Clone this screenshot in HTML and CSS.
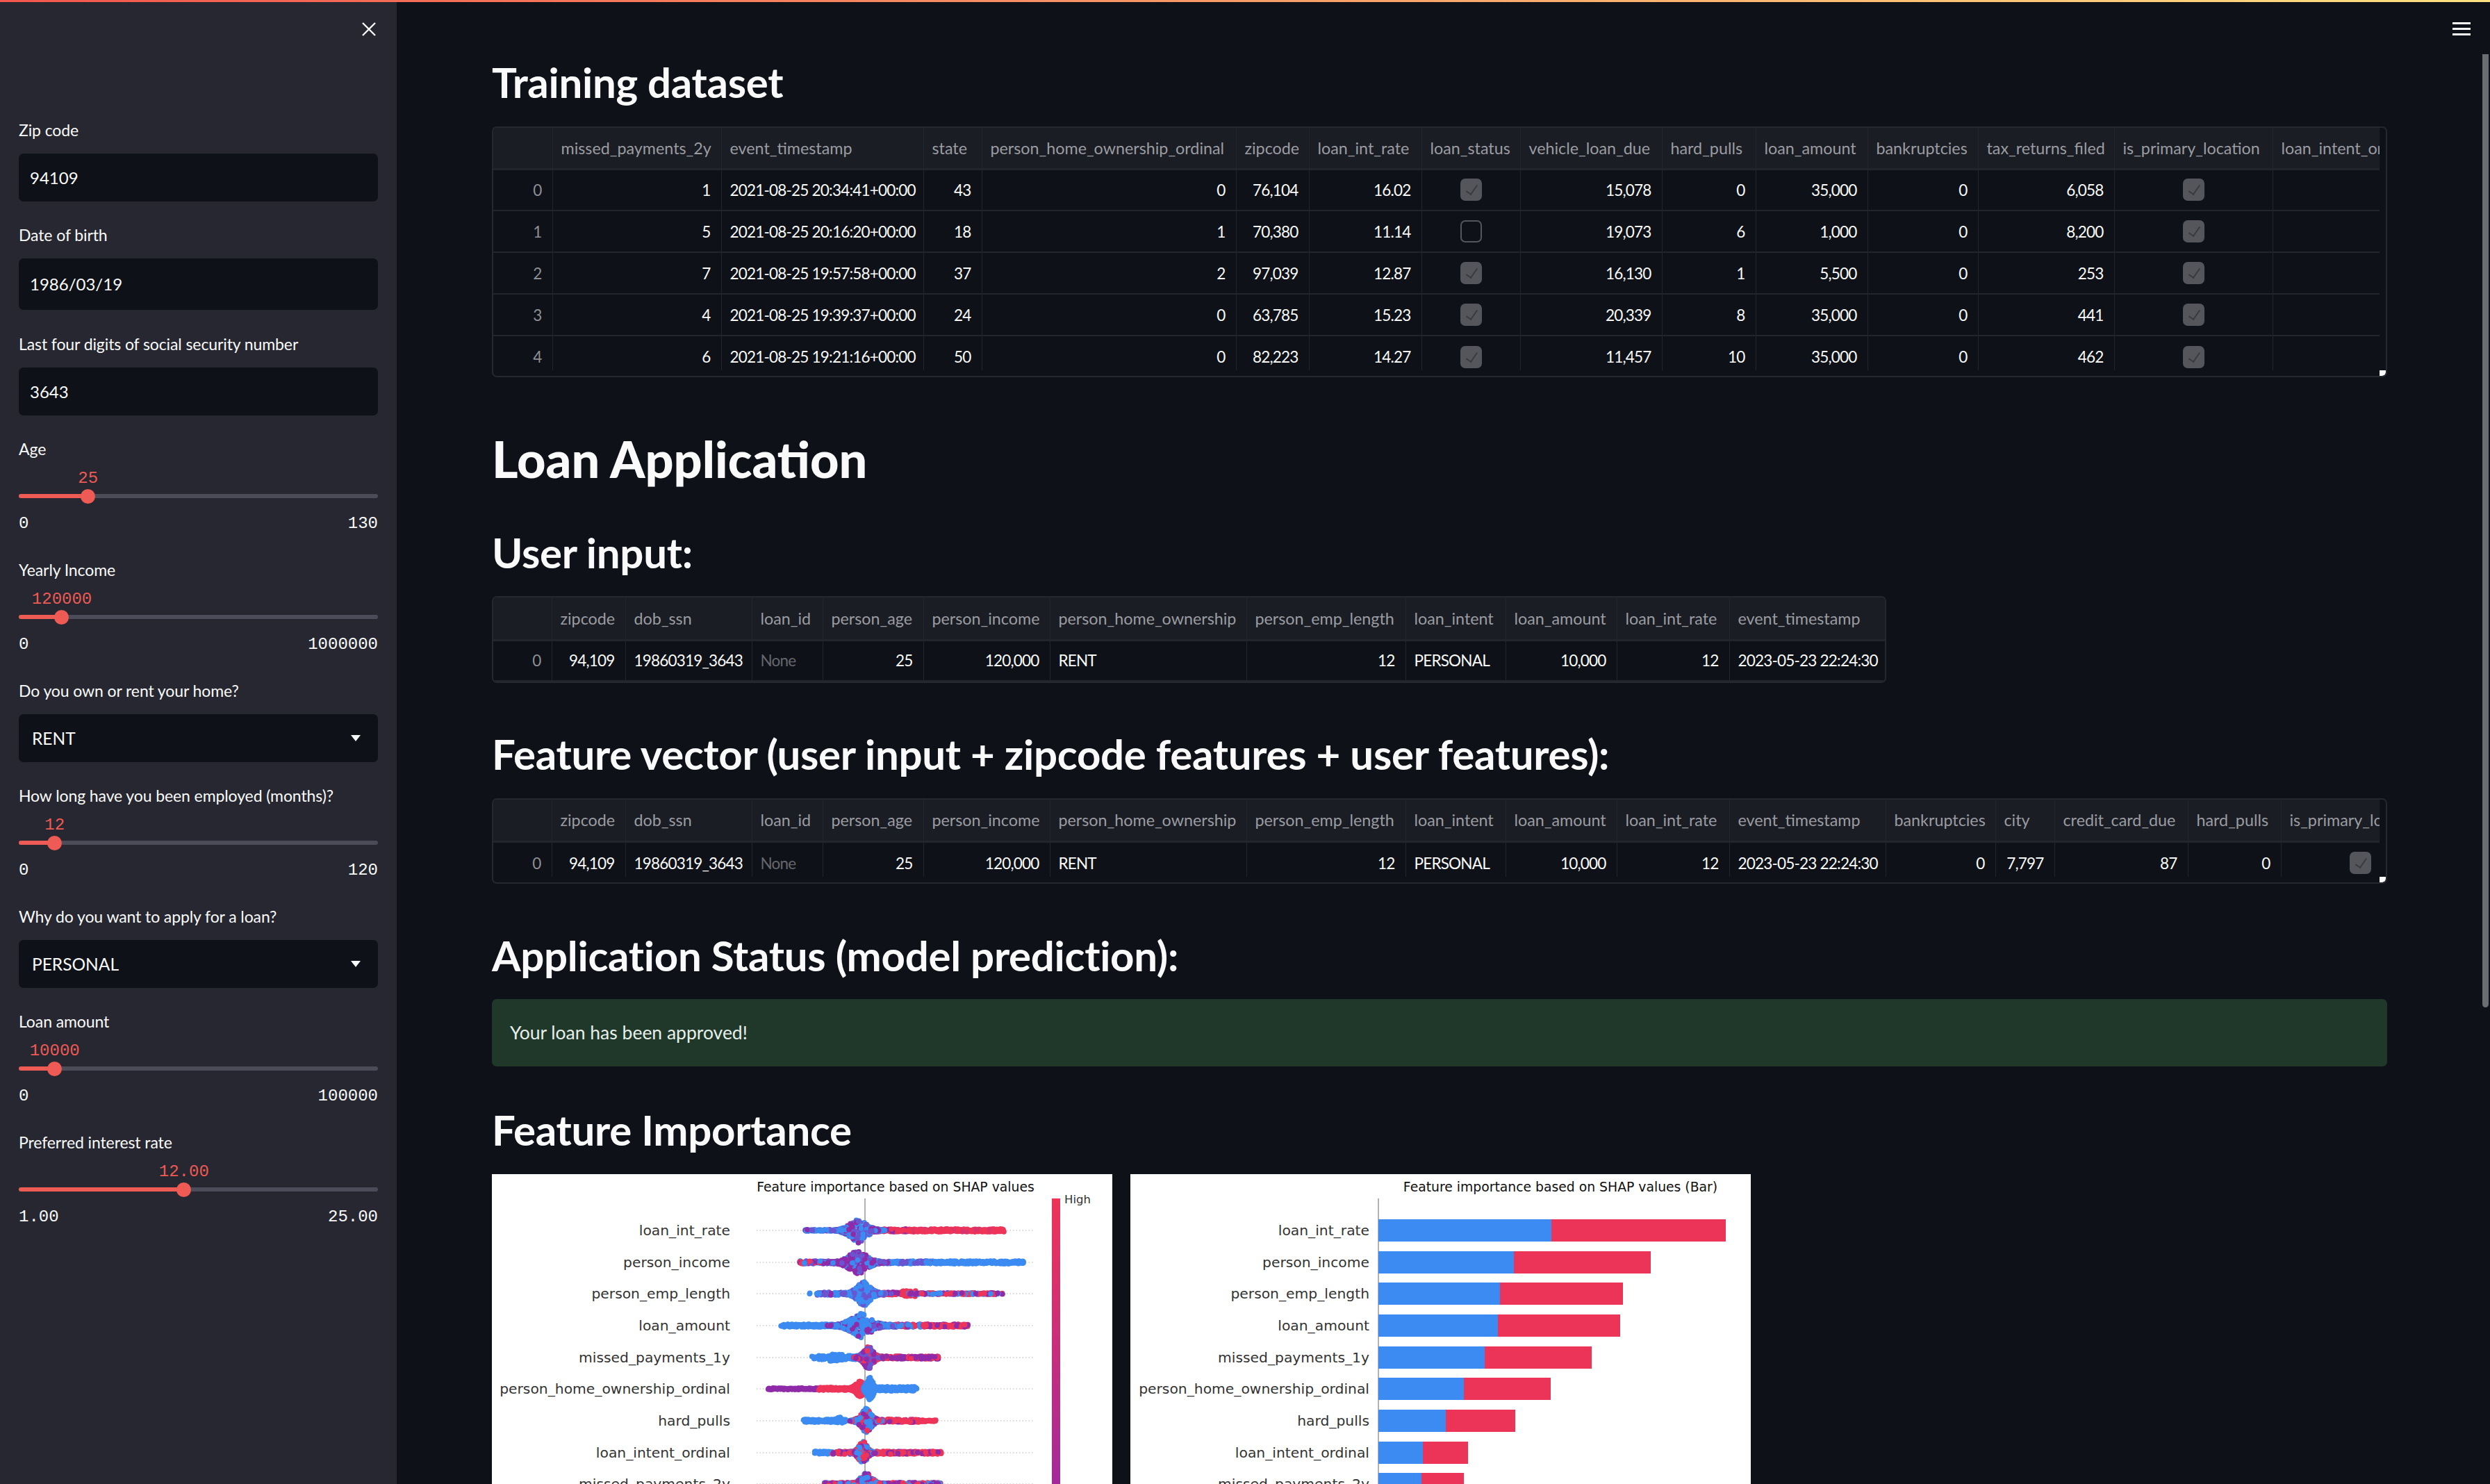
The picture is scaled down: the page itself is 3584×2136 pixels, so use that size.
FILE: index.html
```html
<!DOCTYPE html>
<html lang="en">
<head>
    <meta charset="UTF-8">
    <title>Loan Application</title>
    <link rel="stylesheet" href="styles.css">
</head>
<body>
    <div class="top-line"></div>
    <div class="app">
        <aside class="sidebar">
            <svg class="close-icon" viewBox="0 0 20 20"><path d="M1 1 19 19M19 1 1 19"/></svg>

            <div class="widget">
                <label class="label">Zip code</label>
                <div class="field">94109</div>
            </div>
            <div class="widget">
                <label class="label">Date of birth</label>
                <div class="field field-tall">1986/03/19</div>
            </div>
            <div class="widget">
                <label class="label">Last four digits of social security number</label>
                <div class="field">3643</div>
            </div>
            <div class="widget">
                <label class="label">Age</label>
                <div class="slider">
                    <div class="track"><div class="fill" style="width:19.3%"><span class="thumb"></span><span class="value">25</span></div></div>
                    <div class="range"><span>0</span><span>130</span></div>
                </div>
            </div>
            <div class="widget">
                <label class="label">Yearly Income</label>
                <div class="slider">
                    <div class="track"><div class="fill" style="width:12%"><span class="thumb"></span><span class="value">120000</span></div></div>
                    <div class="range"><span>0</span><span>1000000</span></div>
                </div>
            </div>
            <div class="widget">
                <label class="label">Do you own or rent your home?</label>
                <div class="field select">RENT<svg class="caret" viewBox="0 0 14 9"><path d="M0 0H14L7 9Z"/></svg></div>
            </div>
            <div class="widget">
                <label class="label">How long have you been employed (months)?</label>
                <div class="slider">
                    <div class="track"><div class="fill" style="width:10%"><span class="thumb"></span><span class="value">12</span></div></div>
                    <div class="range"><span>0</span><span>120</span></div>
                </div>
            </div>
            <div class="widget">
                <label class="label">Why do you want to apply for a loan?</label>
                <div class="field select">PERSONAL<svg class="caret" viewBox="0 0 14 9"><path d="M0 0H14L7 9Z"/></svg></div>
            </div>
            <div class="widget">
                <label class="label">Loan amount</label>
                <div class="slider">
                    <div class="track"><div class="fill" style="width:10%"><span class="thumb"></span><span class="value">10000</span></div></div>
                    <div class="range"><span>0</span><span>100000</span></div>
                </div>
            </div>
            <div class="widget">
                <label class="label">Preferred interest rate</label>
                <div class="slider">
                    <div class="track"><div class="fill" style="width:46%"><span class="thumb"></span><span class="value">12.00</span></div></div>
                    <div class="range"><span>1.00</span><span>25.00</span></div>
                </div>
            </div>
        </aside>

        <main class="main">
            <div class="menu-icon"><span></span><span></span><span></span></div>
            <div class="scrollbar"></div>

            <h2 class="title-training">Training dataset</h2>
            <div class="grid grid-wide">
                <div class="grid-scroll">
                    <table class="table-training">
                        <colgroup><col><col><col><col><col><col><col><col><col><col><col><col><col><col><col></colgroup>
                        <thead>
                            <tr><th></th><th>missed_payments_2y</th><th>event_timestamp</th><th>state</th><th>person_home_ownership_ordinal</th><th>zipcode</th><th>loan_int_rate</th><th>loan_status</th><th>vehicle_loan_due</th><th>hard_pulls</th><th>loan_amount</th><th>bankruptcies</th><th>tax_returns_filed</th><th>is_primary_location</th><th>loan_intent_ordinal</th></tr>
                        </thead>
                        <tbody>
                            <tr><td class="idx">0</td><td>1</td><td class="txt">2021-08-25 20:34:41+00:00</td><td>43</td><td>0</td><td>76,104</td><td>16.02</td><td class="chk"><span class="box on"></span></td><td>15,078</td><td>0</td><td>35,000</td><td>0</td><td>6,058</td><td class="chk"><span class="box on"></span></td><td></td></tr>
                            <tr><td class="idx">1</td><td>5</td><td class="txt">2021-08-25 20:16:20+00:00</td><td>18</td><td>1</td><td>70,380</td><td>11.14</td><td class="chk"><span class="box"></span></td><td>19,073</td><td>6</td><td>1,000</td><td>0</td><td>8,200</td><td class="chk"><span class="box on"></span></td><td></td></tr>
                            <tr><td class="idx">2</td><td>7</td><td class="txt">2021-08-25 19:57:58+00:00</td><td>37</td><td>2</td><td>97,039</td><td>12.87</td><td class="chk"><span class="box on"></span></td><td>16,130</td><td>1</td><td>5,500</td><td>0</td><td>253</td><td class="chk"><span class="box on"></span></td><td></td></tr>
                            <tr><td class="idx">3</td><td>4</td><td class="txt">2021-08-25 19:39:37+00:00</td><td>24</td><td>0</td><td>63,785</td><td>15.23</td><td class="chk"><span class="box on"></span></td><td>20,339</td><td>8</td><td>35,000</td><td>0</td><td>441</td><td class="chk"><span class="box on"></span></td><td></td></tr>
                            <tr class="last-row"><td class="idx">4</td><td>6</td><td class="txt">2021-08-25 19:21:16+00:00</td><td>50</td><td>0</td><td>82,223</td><td>14.27</td><td class="chk"><span class="box on"></span></td><td>11,457</td><td>10</td><td>35,000</td><td>0</td><td>462</td><td class="chk"><span class="box on"></span></td><td></td></tr>
                        </tbody>
                    </table>
                </div>
                <span class="resize-corner"></span>
            </div>

            <h1>Loan Application</h1>

            <h2 class="title-user">User input:</h2>
            <div class="grid grid-user">
                <table class="table-user">
                    <colgroup><col><col><col><col><col><col><col><col><col><col><col><col></colgroup>
                    <thead>
                        <tr><th></th><th>zipcode</th><th>dob_ssn</th><th>loan_id</th><th>person_age</th><th>person_income</th><th>person_home_ownership</th><th>person_emp_length</th><th>loan_intent</th><th>loan_amount</th><th>loan_int_rate</th><th>event_timestamp</th></tr>
                    </thead>
                    <tbody>
                        <tr><td class="idx">0</td><td>94,109</td><td class="txt">19860319_3643</td><td class="txt none">None</td><td>25</td><td>120,000</td><td class="txt">RENT</td><td>12</td><td class="txt">PERSONAL</td><td>10,000</td><td>12</td><td class="txt">2023-05-23 22:24:30</td></tr>
                    </tbody>
                </table>
            </div>

            <h2 class="title-feature">Feature vector (user input + zipcode features + user features):</h2>
            <div class="grid grid-wide">
                <div class="grid-scroll">
                    <table class="table-feature">
                        <colgroup><col><col><col><col><col><col><col><col><col><col><col><col><col><col><col><col><col></colgroup>
                        <thead>
                            <tr><th></th><th>zipcode</th><th>dob_ssn</th><th>loan_id</th><th>person_age</th><th>person_income</th><th>person_home_ownership</th><th>person_emp_length</th><th>loan_intent</th><th>loan_amount</th><th>loan_int_rate</th><th>event_timestamp</th><th>bankruptcies</th><th>city</th><th>credit_card_due</th><th>hard_pulls</th><th>is_primary_location</th></tr>
                        </thead>
                        <tbody>
                            <tr class="last-row"><td class="idx">0</td><td>94,109</td><td class="txt">19860319_3643</td><td class="txt none">None</td><td>25</td><td>120,000</td><td class="txt">RENT</td><td>12</td><td class="txt">PERSONAL</td><td>10,000</td><td>12</td><td class="txt">2023-05-23 22:24:30</td><td>0</td><td>7,797</td><td>87</td><td>0</td><td class="chk"><span class="box on"></span></td></tr>
                        </tbody>
                    </table>
                </div>
                <span class="resize-corner"></span>
            </div>

            <h2 class="title-status">Application Status (model prediction):</h2>
            <div class="success">Your loan has been approved!</div>

            <h2 class="title-importance">Feature Importance</h2>
            <div class="charts">
                <svg class="chart" viewBox="0 0 893 447">
                    <defs>
                        <linearGradient id="barGradient" x1="0" y1="0" x2="0" y2="1">
                            <stop offset="0" stop-color="#ee3458"/>
                            <stop offset="1" stop-color="#a32a9a"/>
                        </linearGradient>
                    </defs>
                    <text class="chart-title" x="581" y="25" text-anchor="middle">Feature importance based on SHAP values</text>
                    <g id="dotLines"></g>
                    <line class="axis" x1="537" y1="35" x2="537" y2="447"/>
                    <g id="swarm"></g>
                    <rect x="806" y="35" width="12" height="412" fill="url(#barGradient)"/>
                    <text class="tick" x="824" y="42">High</text>
                    <g class="names" text-anchor="end">
                        <text x="343" y="88">loan_int_rate</text>
                        <text x="343" y="134">person_income</text>
                        <text x="343" y="179">person_emp_length</text>
                        <text x="343" y="225">loan_amount</text>
                        <text x="343" y="271">missed_payments_1y</text>
                        <text x="343" y="316">person_home_ownership_ordinal</text>
                        <text x="343" y="362">hard_pulls</text>
                        <text x="343" y="408">loan_intent_ordinal</text>
                        <text x="343" y="453">missed_payments_2y</text>
                    </g>
                </svg>
                <svg class="chart" viewBox="0 0 893 447">
                    <text class="chart-title" x="619" y="25" text-anchor="middle">Feature importance based on SHAP values (Bar)</text>
                    <line class="axis" x1="357" y1="35" x2="357" y2="447"/>
                    <g id="bars"></g>
                    <g class="names" text-anchor="end">
                        <text x="344" y="88">loan_int_rate</text>
                        <text x="344" y="134">person_income</text>
                        <text x="344" y="179">person_emp_length</text>
                        <text x="344" y="225">loan_amount</text>
                        <text x="344" y="271">missed_payments_1y</text>
                        <text x="344" y="316">person_home_ownership_ordinal</text>
                        <text x="344" y="362">hard_pulls</text>
                        <text x="344" y="408">loan_intent_ordinal</text>
                        <text x="344" y="453">missed_payments_2y</text>
                    </g>
                </svg>
            </div>
        </main>
    </div>
    <script src="charts.js"></script>
</body>
</html>
```

FILE: styles.css
```css
* {
    box-sizing: border-box;
}
html, body {
    margin: 0;
    height: 100%;
    overflow: hidden;
}
body {
    font-family: "Lato", "Noto Sans", sans-serif;
    background-color: #0e1117;
    color: #fafafa;
}
.top-line {
    position: absolute;
    top: 0;
    left: 0;
    right: 0;
    height: 3px;
    z-index: 5;
    background: linear-gradient(90deg, #f2564e, #ffe180);
}
.app {
    display: flex;
    height: 100%;
}

/* sidebar */
.sidebar {
    position: relative;
    width: 571px;
    flex-shrink: 0;
    padding: 173px 27px 0;
    background-color: #262730;
    display: flex;
    flex-direction: column;
    gap: 34px;
}
.close-icon {
    position: absolute;
    top: 32px;
    left: 521px;
    width: 20px;
    height: 20px;
    fill: none;
    stroke: #fafafa;
    stroke-width: 2.4;
}
.label {
    display: block;
    height: 28px;
    line-height: 28px;
    margin-bottom: 20px;
    font-size: 23px;
    letter-spacing: -0.1px;
}
.field {
    height: 69px;
    line-height: 69px;
    padding-left: 16px;
    border-radius: 7px;
    background-color: #0e1117;
    font-size: 24px;
}
.field-tall {
    height: 74px;
    line-height: 74px;
    margin-bottom: 1px;
}
.select {
    position: relative;
    padding-left: 19px;
    font-size: 24.5px;
}
.caret {
    position: absolute;
    top: 30px;
    right: 25px;
    width: 14px;
    height: 9px;
    fill: #fafafa;
}

/* sliders */
.slider {
    height: 112px;
    margin-top: -20px;
    padding-top: 51px;
}
.track {
    height: 6px;
    border-radius: 3px;
    background-color: #4b4c58;
}
.fill {
    position: relative;
    height: 100%;
    border-radius: 3px;
    background-color: #ee5a54;
}
.thumb {
    position: absolute;
    right: -10px;
    top: -7px;
    width: 21px;
    height: 21px;
    border-radius: 50%;
    background-color: #ee5a54;
}
.value {
    position: absolute;
    right: 0;
    top: -36px;
    transform: translateX(50%);
    font-family: "Liberation Mono", monospace;
    font-size: 24px;
    line-height: 28px;
    color: #ee5a54;
}
.range {
    display: flex;
    justify-content: space-between;
    margin-top: 23px;
    font-family: "Liberation Mono", monospace;
    font-size: 24px;
    line-height: 28px;
}

/* main column */
.main {
    position: relative;
    flex: 1;
    padding: 83px 148px 0 137px;
    overflow: hidden;
}
.menu-icon {
    position: absolute;
    top: 32px;
    right: 28px;
    width: 26px;
    display: flex;
    flex-direction: column;
    gap: 5px;
}
.menu-icon span {
    height: 3px;
    background-color: #fafafa;
}
.scrollbar {
    position: absolute;
    top: 78px;
    right: 2px;
    width: 9px;
    height: 1372px;
    border-radius: 0 0 5px 5px;
    background-color: #6c6d72;
}
h1, h2 {
    margin: 0;
    font-weight: 700;
    white-space: nowrap;
}
h1 {
    height: 90px;
    line-height: 90px;
    margin-top: 72px;
    font-size: 72px;
    font-weight: 900;
}
h2 {
    height: 70px;
    line-height: 70px;
    font-size: 60px;
    letter-spacing: -0.3px;
}
.title-training { margin-bottom: 29px; }
.title-user { margin-top: 55px; margin-bottom: 28px; }
.title-feature { margin-top: 67px; margin-bottom: 29px; }
.title-status { margin-top: 68px; margin-bottom: 28px; }
.title-importance { margin-top: 56px; margin-bottom: 29px; }

/* dataframes */
.grid {
    position: relative;
    overflow: hidden;
    border: 2px solid #26282f;
    border-radius: 7px;
}
.grid-wide {
    padding: 0 9px 8px 0;
}
.grid-scroll {
    overflow: hidden;
}
.grid-user {
    width: 2007px;
}
table {
    table-layout: fixed;
    border-collapse: collapse;
    font-size: 23.3px;
}
th, td {
    padding: 0 15px 0 12px;
    border-right: 1px solid #23252c;
    border-bottom: 2px solid #23252c;
    white-space: nowrap;
    overflow: hidden;
}
th:last-child, td:last-child {
    border-right: none;
}
th {
    height: 59px;
    background-color: #1a1d24;
    border-bottom-width: 3px;
    color: #9b9ca1;
    font-weight: 400;
    text-align: left;
}
td {
    height: 60px;
    text-align: right;
    font-size: 22.5px;
    letter-spacing: -0.8px;
}
.last-row td {
    height: 50px;
    padding-top: 10px;
    border-bottom: none;
}
td.txt {
    text-align: left;
}
td.idx {
    color: #8e8f94;
}
td.none {
    color: #66676c;
}
td.chk {
    padding-left: 0;
    padding-right: 0;
    text-align: center;
}
.box {
    display: inline-block;
    width: 31px;
    height: 32px;
    vertical-align: middle;
    border: 2px solid #55565c;
    border-radius: 7px;
}
.box.on {
    position: relative;
    background-color: #55565c;
}
.box.on::after {
    content: "";
    position: absolute;
    left: 10px;
    top: 4px;
    width: 7px;
    height: 15px;
    border: solid #393a40;
    border-width: 0 2px 2px 0;
    transform: rotate(35deg);
}
.resize-corner {
    position: absolute;
    right: 0;
    bottom: 0;
    width: 9px;
    height: 8px;
    border-radius: 0 0 5px 0;
    background-color: #fafafa;
}
.table-training { width: 2851px; }
.table-training col:nth-child(1) { width: 85px; }
.table-training col:nth-child(2) { width: 243px; }
.table-training col:nth-child(3) { width: 291px; }
.table-training col:nth-child(4) { width: 84px; }
.table-training col:nth-child(5) { width: 366px; }
.table-training col:nth-child(6) { width: 105px; }
.table-training col:nth-child(7) { width: 162px; }
.table-training col:nth-child(8) { width: 142px; }
.table-training col:nth-child(9) { width: 204px; }
.table-training col:nth-child(10) { width: 135px; }
.table-training col:nth-child(11) { width: 161px; }
.table-training col:nth-child(12) { width: 159px; }
.table-training col:nth-child(13) { width: 196px; }
.table-training col:nth-child(14) { width: 228px; }
.table-training col:nth-child(15) { width: 290px; }

.table-user { width: 2004px; }
.table-feature { width: 2805px; }
.table-user col:nth-child(1), .table-feature col:nth-child(1) { width: 84px; }
.table-user col:nth-child(2), .table-feature col:nth-child(2) { width: 106px; }
.table-user col:nth-child(3), .table-feature col:nth-child(3) { width: 182px; }
.table-user col:nth-child(4), .table-feature col:nth-child(4) { width: 102px; }
.table-user col:nth-child(5), .table-feature col:nth-child(5) { width: 145px; }
.table-user col:nth-child(6), .table-feature col:nth-child(6) { width: 182px; }
.table-user col:nth-child(7), .table-feature col:nth-child(7) { width: 283px; }
.table-user col:nth-child(8), .table-feature col:nth-child(8) { width: 229px; }
.table-user col:nth-child(9), .table-feature col:nth-child(9) { width: 144px; }
.table-user col:nth-child(10), .table-feature col:nth-child(10) { width: 160px; }
.table-user col:nth-child(11), .table-feature col:nth-child(11) { width: 162px; }
.table-user col:nth-child(12), .table-feature col:nth-child(12) { width: 225px; }
.table-feature col:nth-child(13) { width: 158px; }
.table-feature col:nth-child(14) { width: 85px; }
.table-feature col:nth-child(15) { width: 192px; }
.table-feature col:nth-child(16) { width: 134px; }
.table-feature col:nth-child(17) { width: 232px; }
.table-user th { height: 61px; }
.table-user td { height: 59px; }
.table-feature th { height: 60px; }
.table-feature .last-row td { height: 51px; }
.table-feature td.chk {
    text-align: left;
    padding-left: 98px;
}

.success {
    height: 97px;
    line-height: 97px;
    padding-left: 26px;
    border-radius: 7px;
    background-color: #20382a;
    color: #e6efe9;
    font-size: 26.5px;
}

/* shap pictures */
.charts {
    display: flex;
    gap: 26px;
}
.chart {
    display: block;
    width: 893px;
    height: 447px;
    flex-shrink: 0;
    background-color: #fff;
}
.chart text {
    font-family: "DejaVu Sans", sans-serif;
}
.chart-title {
    font-size: 18.8px;
    fill: #111;
}
.tick {
    font-size: 16.5px;
    fill: #333;
}
.names text {
    font-size: 20.3px;
    fill: #333;
}
.axis {
    stroke: #999;
    stroke-width: 1.5;
}
.dot-line {
    stroke: #ccc;
    stroke-width: 1.5;
    stroke-dasharray: 1.5 3;
}
```

FILE: charts.js
```js
// Draws the two SHAP pictures from the numbers below
const NS = 'http://www.w3.org/2000/svg';
const BLUE = '#3b8bf2';
const RED = '#ee3458';
const PURPLE = '#8f2ba8';
const VIOLET = '#6a54d0';

function el(name, attrs, parent) {
    const node = document.createElementNS(NS, name);
    Object.keys(attrs).forEach(key => node.setAttribute(key, attrs[key]));
    parent.appendChild(node);
    return node;
}

// small seeded random so that every load looks the same
let seed = 12345;
function rnd() {
    seed = (seed * 16807) % 2147483647;
    return seed / 2147483647;
}
function pick(list) {
    return list[Math.floor(rnd() * list.length)];
}

// y, centre, peak width, peak height, peak colours, then tails [from, to, thickness, colours]
const swarmRows = [
    { y: 81, cx: 527, w: 16, h: 18, colors: [BLUE, BLUE, VIOLET, PURPLE], tails: [
        [451, 500, 1, [BLUE, BLUE, VIOLET, PURPLE]], [540, 600, 2, [RED, PURPLE, RED]], [600, 738, 2, [RED, RED, RED, '#d9336a']]] },
    { y: 127, cx: 527, w: 18, h: 18, colors: [PURPLE, VIOLET, BLUE, PURPLE], tails: [
        [443, 500, 2, [PURPLE, BLUE, RED, VIOLET]], [545, 640, 2, [BLUE, BLUE, VIOLET]], [640, 766, 2, [BLUE]]] },
    { y: 172, cx: 535, w: 13, h: 18, colors: [BLUE, BLUE, VIOLET], tails: [
        [457, 458, 1, [BLUE]], [467, 520, 2, [VIOLET, BLUE, PURPLE]], [540, 600, 2, [PURPLE, VIOLET, RED]], [590, 610, 4, [RED]], [600, 735, 1, [PURPLE, RED, RED, BLUE]]] },
    { y: 218, cx: 531, w: 20, h: 18, colors: [BLUE, BLUE, VIOLET, PURPLE], tails: [
        [416, 510, 2, [BLUE]], [550, 620, 2, [PURPLE, RED, BLUE, VIOLET]], [620, 686, 2, [RED, PURPLE, RED]]] },
    { y: 264, cx: 542, w: 9, h: 18, colors: [PURPLE, RED, VIOLET], tails: [
        [460, 530, 3, [BLUE]], [485, 505, 5, [BLUE]], [550, 643, 2, [PURPLE, RED, PURPLE]]] },
    { y: 309, cx: 530, w: 9, h: 12, colors: [RED], tails: [
        [397, 470, 1, [PURPLE]], [470, 520, 2, [RED]], [550, 612, 3, [BLUE]]] },
    { y: 355, cx: 539, w: 10, h: 18, colors: [PURPLE, BLUE, BLUE, RED], tails: [
        [448, 510, 2, [BLUE]], [495, 505, 5, [BLUE]], [550, 615, 2, [RED, RED, PURPLE]], [615, 639, 1, [RED]]] },
    { y: 401, cx: 534, w: 8, h: 18, colors: [PURPLE, RED, BLUE], tails: [
        [464, 490, 2, [BLUE]], [490, 525, 2, [PURPLE, VIOLET, RED]], [545, 647, 2, [PURPLE, RED, RED]]] },
    { y: 446, cx: 539, w: 11, h: 18, colors: [BLUE, PURPLE, RED], tails: [
        [478, 647, 2, [PURPLE, RED, BLUE]]] }
];

const dotLines = document.getElementById('dotLines');
const swarm = document.getElementById('swarm');

swarmRows.forEach((row, index) => {
    el('line', { class: 'dot-line', x1: 381, y1: row.y, x2: 780, y2: row.y }, dotLines);

    row.tails.forEach(tail => {
        const count = Math.ceil((tail[1] - tail[0]) * 2);
        for (let i = 0; i < count; i++) {
            el('circle', {
                cx: (tail[0] + rnd() * (tail[1] - tail[0])).toFixed(1),
                cy: (row.y + (rnd() - 0.5) * tail[2] * 2).toFixed(1),
                r: 3.8,
                fill: pick(tail[3])
            }, swarm);
        }
    });

    for (let i = 0; i < 320; i++) {
        const side = rnd() < 0.5 ? -1 : 1;
        const dist = rnd() * row.w * 2.4;
        const high = row.h * Math.exp(-Math.pow(dist / row.w, 1.5));
        el('circle', {
            cx: (row.cx + side * dist).toFixed(1),
            cy: (row.y + (rnd() * 2 - 1) * high).toFixed(1),
            r: 3.8,
            fill: pick(row.colors)
        }, swarm);
    }

    // the person_home_ownership row has a second blue peak beside the red one
    if (index === 5) {
        for (let i = 0; i < 120; i++) {
            const dist = (rnd() * 2 - 1) * 9;
            el('circle', {
                cx: (544 + dist).toFixed(1),
                cy: (row.y + (rnd() * 2 - 1) * 18 * (1 - Math.abs(dist) / 10)).toFixed(1),
                r: 3.8,
                fill: BLUE
            }, swarm);
        }
    }
});

// bar ends, from zero line: [blue, red]
const barRows = [
    [81, 249, 500], [127, 195, 392], [172, 175, 352], [218, 172, 348],
    [264, 153, 307], [309, 123, 248], [355, 97, 197], [401, 64, 129], [446, 62, 123]
];
const bars = document.getElementById('bars');
barRows.forEach(row => {
    el('rect', { x: 357, y: row[0] - 16, width: row[1], height: 32, fill: '#3b8bf2' }, bars);
    el('rect', { x: 357 + row[1], y: row[0] - 16, width: row[2] - row[1], height: 32, fill: '#eb3458' }, bars);
});
```
